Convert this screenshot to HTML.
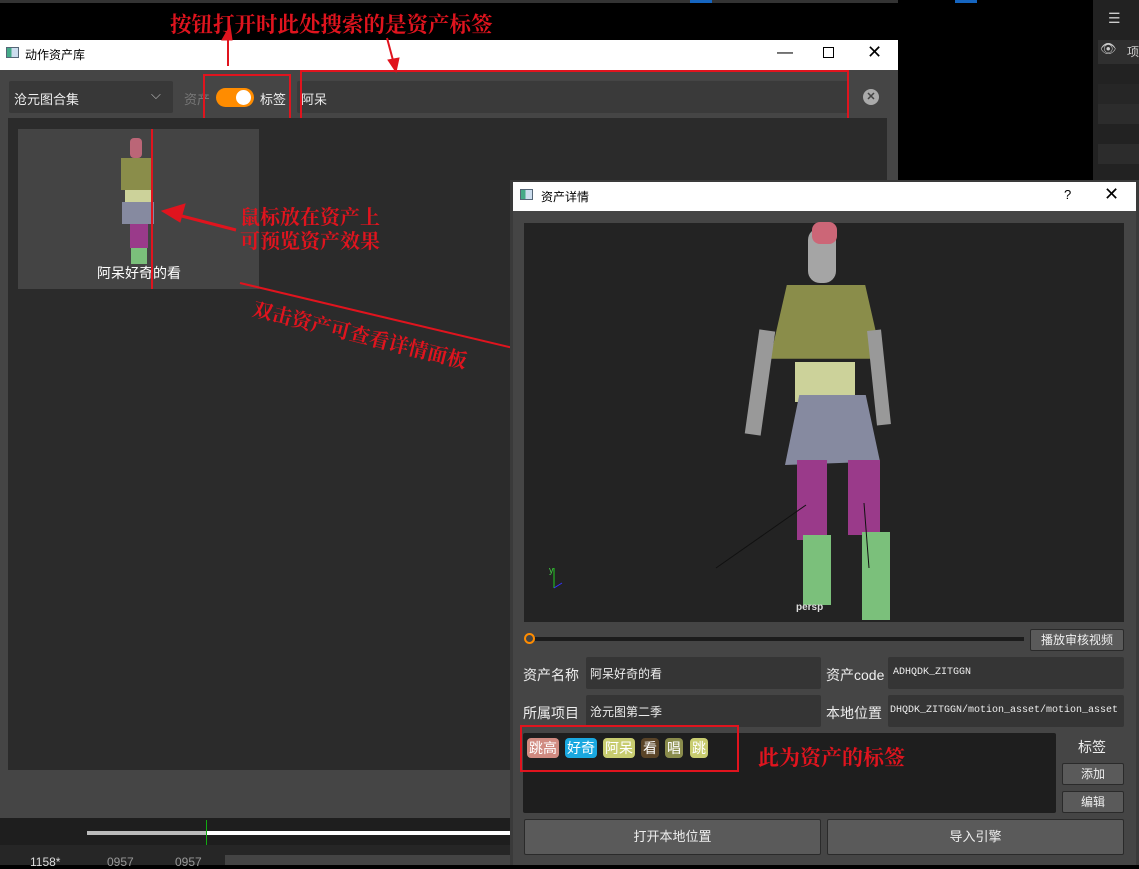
<!DOCTYPE html>
<html><head><meta charset="utf-8"><style>
*{margin:0;padding:0;box-sizing:border-box}
body{width:1139px;height:865px;background:#000;position:relative;overflow:hidden;font-family:"Liberation Sans","Noto Sans CJK SC",sans-serif;font-size:13px;color:#eee}
.a{position:absolute}
.red{color:#e0141e;font-family:"Noto Serif CJK SC","Liberation Serif",serif;font-weight:bold;white-space:nowrap}
.box{border:2px solid #e0141e}
.fld{background:#353535;border-radius:2px}
.btn{background:#5a5a5a;border:1px solid #2a2a2a;border-radius:2px;color:#eee;text-align:center}
.tag{position:absolute;top:738px;height:20px;border-radius:4px;font-size:14px;line-height:20px;padding:0 2px;color:#fff}
</style></head><body>
<div class="a" style="left:0;top:0;width:898px;height:3px;background:#333"></div>
<div class="a" style="left:690px;top:0;width:22px;height:3px;background:#1565c0"></div>
<div class="a" style="left:955px;top:0;width:22px;height:3px;background:#1565c0"></div>
<div class="a" style="left:1093px;top:0;width:46px;height:182px;background:#222"></div>
<div class="a" style="left:1098px;top:40px;width:41px;height:24px;background:#2f2f2f"></div>
<div class="a" style="left:1108px;top:10px;color:#ccc;font-size:14px">☰</div>
<div class="a" style="left:1100px;top:41px;color:#ccc;font-size:13px">👁</div>
<div class="a" style="left:1127px;top:43px;color:#ccc;font-size:12px">项</div>
<div class="a" style="left:1098px;top:84px;width:41px;height:20px;background:#262626"></div>
<div class="a" style="left:1098px;top:104px;width:41px;height:20px;background:#2c2c2c"></div>
<div class="a" style="left:1098px;top:144px;width:41px;height:20px;background:#2c2c2c"></div>

<div class="a" style="left:0;top:40px;width:898px;height:30px;background:#fff"></div>
<div class="a" style="left:6px;top:47px;width:13px;height:11px;border:1px solid #567;background:linear-gradient(90deg,#4a8 0 40%,#cde 40%)"></div>
<div class="a" style="left:25px;top:46px;color:#000;font-size:12px">动作资产库</div>
<div class="a" style="left:777px;top:44px;color:#000;font-size:16px">—</div>
<div class="a" style="left:823px;top:47px;width:11px;height:11px;border:1px solid #000"></div>
<div class="a" style="left:867px;top:42px;color:#000;font-size:18px">✕</div>
<div class="a" style="left:0;top:70px;width:898px;height:750px;background:#454545"></div>
<div class="a fld" style="left:9px;top:81px;width:164px;height:32px;background:#383838"></div>
<div class="a" style="left:14px;top:89px;font-size:13px">沧元图合集</div>
<div class="a" style="left:151px;top:87px;color:#bbb;font-size:13px">⌵</div>
<div class="a" style="left:184px;top:89px;color:#777">资产</div>
<div class="a" style="left:216px;top:88px;width:38px;height:19px;border-radius:10px;background:#ff8c00"></div>
<div class="a" style="left:236px;top:90px;width:15px;height:15px;border-radius:50%;background:#fff"></div>
<div class="a" style="left:260px;top:89px">标签</div>
<div class="a box" style="left:203px;top:74px;width:88px;height:47px"></div>
<div class="a fld" style="left:297px;top:81px;width:552px;height:32px;background:#3a3a3a"></div>
<div class="a" style="left:301px;top:89px">阿呆</div>
<div class="a box" style="left:300px;top:70px;width:549px;height:55px"></div>
<div class="a" style="left:863px;top:89px;width:16px;height:16px;border-radius:50%;background:#aaa;color:#444;font-size:11px;line-height:16px;text-align:center;font-weight:bold">✕</div>
<div class="a" style="left:8px;top:118px;width:879px;height:652px;background:#2b2b2b"></div>
<div class="a" style="left:18px;top:129px;width:241px;height:160px;background:#444"></div>
<div class="a" style="left:130px;top:138px;width:12px;height:20px;background:#b67;border-radius:4px"></div>
<div class="a" style="left:121px;top:158px;width:30px;height:32px;background:#8a8d4a"></div>
<div class="a" style="left:125px;top:190px;width:26px;height:12px;background:#ccd29a"></div>
<div class="a" style="left:122px;top:202px;width:32px;height:22px;background:#868aa0"></div>
<div class="a" style="left:130px;top:224px;width:18px;height:24px;background:#9a3a8a"></div>
<div class="a" style="left:131px;top:248px;width:16px;height:16px;background:#7bc07b"></div>
<div class="a" style="left:97px;top:263px;font-size:14px;color:#fff">阿呆好奇的看</div>
<div class="a" style="left:151px;top:129px;width:2px;height:160px;background:#e0141e"></div>
<svg class="a" style="left:0;top:0" width="900" height="380">
<g stroke="#e0141e" fill="#e0141e">
<line x1="228" y1="66" x2="228" y2="34" stroke-width="2"/><polygon points="230,26 222,40 232,40"/>
<line x1="387" y1="38" x2="394" y2="64" stroke-width="2"/><polygon points="396,72 388,60 399,58"/>
<line x1="236" y1="230" x2="170" y2="213" stroke-width="3"/><polygon points="162,211 185,204 180,222"/>
<line x1="240" y1="283" x2="530" y2="352" stroke-width="2"/><polygon points="540,354 522,343 519,357"/>
</g></svg>
<div class="a red" style="left:170px;top:8px;font-size:21.5px">按钮打开时此处搜索的是资产标签</div>
<div class="a red" style="left:240px;top:204px;font-size:20px;line-height:24px">鼠标放在资产上<br>可预览资产效果</div>
<div class="a red" style="left:257px;top:293px;font-size:20px;transform:rotate(14deg);transform-origin:left top">双击资产可查看详情面板</div>

<div class="a" style="left:0;top:818px;width:512px;height:47px;background:#1e1e1e"></div>
<div class="a" style="left:87px;top:831px;width:425px;height:4px;background:#fff"></div>
<div class="a" style="left:87px;top:831px;width:120px;height:4px;background:#bbb"></div>
<div class="a" style="left:206px;top:820px;width:1px;height:25px;background:#1a1"></div>
<div class="a" style="left:0;top:845px;width:512px;height:20px;background:#262626"></div>
<div class="a" style="left:30px;top:855px;font-size:12px;color:#ddd">1158*</div>
<div class="a" style="left:107px;top:855px;font-size:12px;color:#999">0957</div>
<div class="a" style="left:175px;top:855px;font-size:12px;color:#999">0957</div>
<div class="a" style="left:225px;top:855px;width:287px;height:10px;background:#444"></div>

<div class="a" style="left:510px;top:180px;width:629px;height:685px;background:#3a3a3a"></div>
<div class="a" style="left:513px;top:182px;width:623px;height:29px;background:#fff"></div>
<div class="a" style="left:520px;top:189px;width:13px;height:11px;border:1px solid #567;background:linear-gradient(90deg,#4a8 0 40%,#cde 40%)"></div>
<div class="a" style="left:541px;top:188px;color:#000;font-size:12px">资产详情</div>
<div class="a" style="left:1064px;top:187px;color:#000;font-size:13px">?</div>
<div class="a" style="left:1104px;top:184px;color:#000;font-size:18px">✕</div>
<div class="a" style="left:513px;top:211px;width:623px;height:654px;background:#454545"></div>
<div class="a" style="left:524px;top:223px;width:600px;height:399px;background:#232323"></div>
<div class="a" style="left:808px;top:228px;width:28px;height:55px;background:#a5a5a5;border-radius:12px"></div>
<div class="a" style="left:812px;top:222px;width:25px;height:22px;background:#c67;border-radius:8px"></div>
<div class="a" style="left:770px;top:285px;width:112px;height:82px;background:#8a8d4a;clip-path:polygon(15% 0,85% 0,100% 90%,0 90%)"></div>
<div class="a" style="left:752px;top:330px;width:16px;height:105px;background:#999;transform:rotate(8deg)"></div>
<div class="a" style="left:872px;top:330px;width:14px;height:95px;background:#999;transform:rotate(-6deg)"></div>
<div class="a" style="left:795px;top:362px;width:60px;height:40px;background:#ccd29a"></div>
<div class="a" style="left:785px;top:395px;width:95px;height:70px;background:#868aa0;clip-path:polygon(15% 0,85% 0,100% 95%,0 100%)"></div>
<div class="a" style="left:797px;top:460px;width:30px;height:80px;background:#9a3a8a"></div>
<div class="a" style="left:848px;top:460px;width:32px;height:75px;background:#9a3a8a"></div>
<div class="a" style="left:803px;top:535px;width:28px;height:70px;background:#7bc07b"></div>
<div class="a" style="left:862px;top:532px;width:28px;height:88px;background:#7bc07b"></div>
<svg class="a" style="left:524px;top:223px" width="600" height="400"><g stroke="#111" stroke-width="1"><line x1="282" y1="282" x2="192" y2="345"/><line x1="340" y1="280" x2="345" y2="345"/></g><line x1="30" y1="345" x2="30" y2="365" stroke="#2c2"/><line x1="30" y1="365" x2="38" y2="360" stroke="#33f"/></svg>
<div class="a" style="left:549px;top:565px;color:#4c4;font-size:9px">y</div>
<div class="a" style="left:796px;top:602px;font-size:10px;font-weight:bold;color:#ddd">persp</div>
<div class="a" style="left:524px;top:633px;width:11px;height:11px;border-radius:50%;border:2px solid #ff8c00"></div>
<div class="a" style="left:535px;top:637px;width:489px;height:4px;background:#1c1c1c"></div>
<div class="a btn" style="left:1030px;top:629px;width:94px;height:22px;line-height:20px;font-size:12px">播放审核视频</div>
<div class="a" style="left:523px;top:665px;font-size:14px">资产名称</div>
<div class="a fld" style="left:586px;top:657px;width:235px;height:32px"></div>
<div class="a" style="left:590px;top:665px;font-size:12px">阿呆好奇的看</div>
<div class="a" style="left:826px;top:665px;font-size:14px">资产code</div>
<div class="a fld" style="left:888px;top:657px;width:236px;height:32px"></div>
<div class="a" style="left:893px;top:667px;font-size:10px;font-family:'Liberation Mono',monospace">ADHQDK_ZITGGN</div>
<div class="a" style="left:523px;top:703px;font-size:14px">所属项目</div>
<div class="a fld" style="left:586px;top:695px;width:235px;height:32px"></div>
<div class="a" style="left:590px;top:703px;font-size:12px">沧元图第二季</div>
<div class="a" style="left:826px;top:703px;font-size:14px">本地位置</div>
<div class="a fld" style="left:888px;top:695px;width:236px;height:32px"></div>
<div class="a" style="left:890px;top:705px;font-size:10px;font-family:'Liberation Mono',monospace;white-space:nowrap">DHQDK_ZITGGN/motion_asset/motion_asset</div>
<div class="a" style="left:523px;top:733px;width:533px;height:80px;background:#1e1e1e;border-radius:2px"></div>
<div class="tag" style="left:527px;background:#d08a80">跳高</div>
<div class="tag" style="left:565px;background:#1aa8e0">好奇</div>
<div class="tag" style="left:603px;background:#c8cc70">阿呆</div>
<div class="tag" style="left:641px;background:#5a4428">看</div>
<div class="tag" style="left:665px;background:#8a8c4c">唱</div>
<div class="tag" style="left:690px;background:#c8cc70">跳</div>
<div class="a box" style="left:520px;top:725px;width:219px;height:47px"></div>
<div class="a red" style="left:758px;top:742px;font-size:21px">此为资产的标签</div>
<div class="a" style="left:1078px;top:737px;font-size:14px">标签</div>
<div class="a btn" style="left:1062px;top:763px;width:62px;height:22px;line-height:20px;font-size:12px">添加</div>
<div class="a btn" style="left:1062px;top:791px;width:62px;height:22px;line-height:20px;font-size:12px">编辑</div>
<div class="a btn" style="left:524px;top:819px;width:297px;height:36px;line-height:34px;font-size:13px">打开本地位置</div>
<div class="a btn" style="left:827px;top:819px;width:297px;height:36px;line-height:34px;font-size:13px">导入引擎</div>
</body></html>
